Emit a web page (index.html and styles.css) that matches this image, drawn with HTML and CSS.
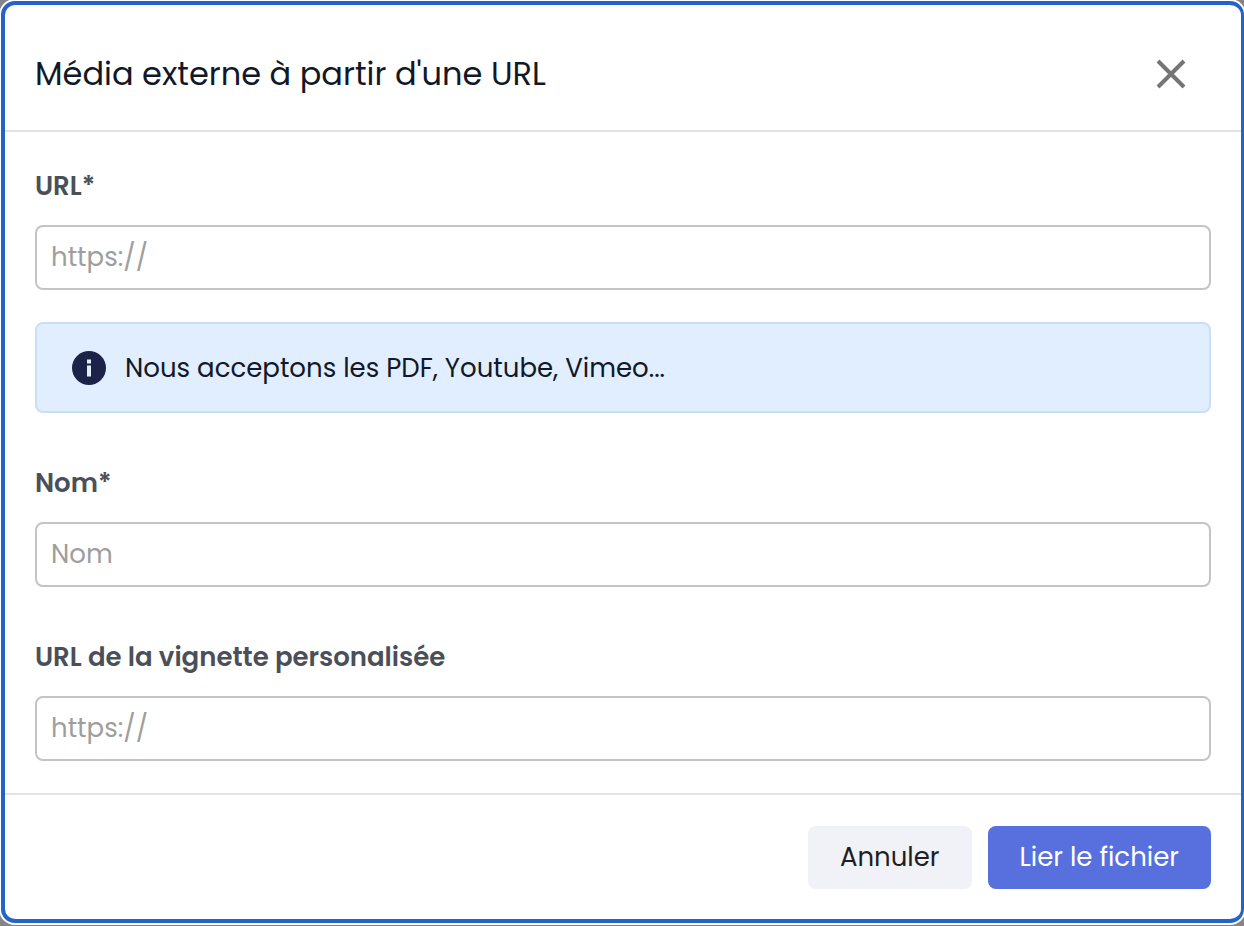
FILE: index.html
```html
<!DOCTYPE html>
<html lang="fr">
<head>
    <meta charset="UTF-8">
    <meta name="viewport" content="width=device-width, initial-scale=1.0">
    <title>Média externe</title>
    <link rel="stylesheet" href="styles.css">
</head>
<body>
    <form class="modal" role="dialog" aria-labelledby="modalTitle">
        <header class="modal-header">
            <h1 id="modalTitle">Média externe à partir d'une URL</h1>
            <button type="button" class="close" aria-label="Fermer">
                <svg width="32" height="32" viewBox="0 0 32 32" aria-hidden="true">
                    <path d="M3 3L29 29M29 3L3 29" stroke="#757575" stroke-width="4" fill="none"/>
                </svg>
            </button>
        </header>

        <div class="modal-body">
            <div class="field">
                <label for="url">URL*</label>
                <input type="url" id="url" name="url" placeholder="https://" required>
                <div class="info">
                    <svg width="34" height="34" viewBox="0 0 34 34" aria-hidden="true">
                        <circle cx="17" cy="17" r="17" fill="#1c2349"/>
                        <path d="M15 8.500h4v4h-4zM15 14.500h4v11h-4z" fill="#e1eeff"/>
                    </svg>
                    <span>Nous acceptons les PDF, Youtube, Vimeo...</span>
                </div>
            </div>
            <div class="field">
                <label for="name">Nom*</label>
                <input type="text" id="name" name="name" placeholder="Nom" required>
            </div>
            <div class="field">
                <label for="thumbnail">URL de la vignette personalisée</label>
                <input type="url" id="thumbnail" name="thumbnail" placeholder="https://">
            </div>
        </div>

        <footer class="modal-footer">
            <button type="button" class="btn btn-cancel">Annuler</button>
            <button type="submit" class="btn btn-submit">Lier le fichier</button>
        </footer>
    </form>
</body>
</html>
```
FILE: styles.css
```css
* {
    box-sizing: border-box;
}
body {
    margin: 0;
    padding: 1px 0 3px 1px;
    background-color: #858585;
    font-family: Poppins, Inter, sans-serif;
    font-size: 26px;
    line-height: 32px;
    color: #111827;
}
input, button {
    font: inherit;
}
.modal {
    background-color: #fff;
    border: 4px solid #2563c9;
    border-right-width: 3px;
    border-radius: 14px;
    box-shadow: 0 0 0 2px #fff;
}
.modal-header {
    display: flex;
    justify-content: space-between;
    align-items: center;
    padding: 46px 54px 34px 30px;
    border-bottom: 2px solid #e2e2e2;
}
h1 {
    margin: 0;
    font-size: 32px;
    font-weight: 400;
    line-height: 45px;
}
.close {
    display: flex;
    padding: 0;
    border: none;
    background: none;
    cursor: pointer;
}
.modal-body {
    display: flex;
    flex-direction: column;
    gap: 54px;
    padding: 38px 30px 32px;
}
label {
    display: block;
    margin-bottom: 23px;
    font-weight: 600;
    color: #4b5058;
}
input {
    display: block;
    width: 100%;
    height: 65px;
    padding: 0 14px;
    border: 2px solid #c4c4c4;
    border-radius: 8px;
    background-color: #fff;
    color: #111827;
}
input::placeholder {
    color: #9e9e9e;
    opacity: 1;
}
.info {
    display: flex;
    align-items: center;
    gap: 19px;
    min-height: 91px;
    margin-top: 32px;
    padding: 0 35px;
    border: 2px solid #c9defa;
    border-radius: 8px;
    background-color: #e1eeff;
}
.modal-footer {
    display: flex;
    justify-content: flex-end;
    gap: 16px;
    padding: 31px 30px 30px;
    border-top: 2px solid #e2e2e2;
}
.btn {
    padding: 15px 32px 16px;
    border: none;
    border-radius: 8px;
    cursor: pointer;
}
.btn-cancel {
    background-color: #f1f2f7;
    color: #1f1f1f;
}
.btn-submit {
    background-color: #5870de;
    color: #fff;
}
```
